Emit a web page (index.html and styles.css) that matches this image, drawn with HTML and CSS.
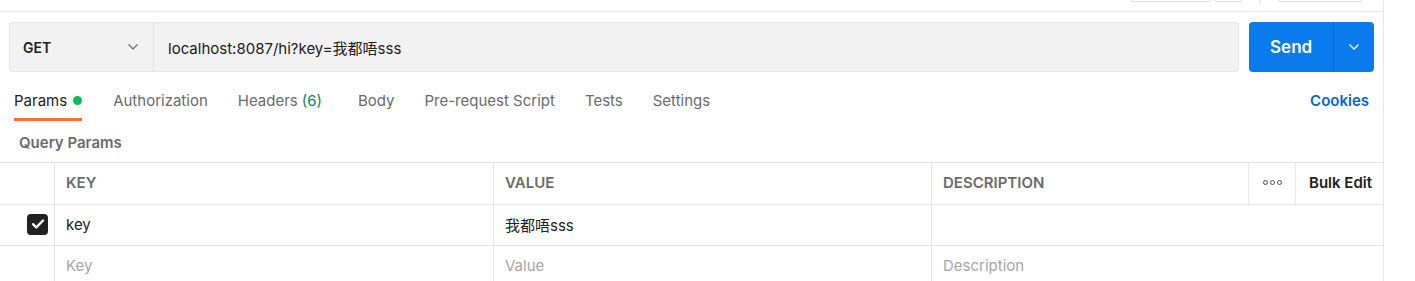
FILE: index.html
```html
<!DOCTYPE html>
<html>
<head>
<meta charset="utf-8">
<link rel="stylesheet" href="styles.css">
</head>
<body>
<div class="page">
  <div class="main">
    <div class="topbar">
      <div class="tb-btn tb-a"></div>
      <div class="tb-btn tb-b"></div>
      <div class="tb-sep"></div>
      <div class="tb-btn tb-c"></div>
    </div>
    <div class="request">
      <div class="urlbar">
        <div class="method">
          <span class="method-name">GET</span>
          <svg class="chev" width="12" height="8" viewBox="0 0 12 8"><path d="M1.5 1.5 L6 6 L10.5 1.5" fill="none" stroke="#6b6b6b" stroke-width="1.2"/></svg>
        </div>
        <div class="url">localhost:8087/hi?key=我都唔sss</div>
      </div>
      <div class="send">
        <span class="send-label">Send</span>
        <span class="send-drop"><svg width="12" height="8" viewBox="0 0 12 8"><path d="M1.5 1.5 L6 6 L10.5 1.5" fill="none" stroke="#fff" stroke-width="1.3"/></svg></span>
      </div>
    </div>
    <div class="tabs">
      <div class="tab active">Params <span class="dot"></span></div>
      <div class="tab">Authorization</div>
      <div class="tab tab-wide">Headers <span class="count">(6)</span></div>
      <div class="tab">Body</div>
      <div class="tab">Pre-request Script</div>
      <div class="tab">Tests</div>
      <div class="tab">Settings</div>
      <div class="spacer"></div>
      <div class="cookies">Cookies</div>
    </div>
    <div class="qp">Query Params</div>
    <div class="table">
      <div class="row head">
        <div class="cell c-check"></div>
        <div class="cell c-key">KEY</div>
        <div class="cell c-val">VALUE</div>
        <div class="cell c-desc">DESCRIPTION</div>
        <div class="cell c-more"><span class="dots"><i></i><i></i><i></i></span></div>
        <div class="cell c-bulk">Bulk Edit</div>
      </div>
      <div class="row">
        <div class="cell c-check"><span class="checkbox"><svg width="14" height="12" viewBox="0 0 14 12"><path d="M2 6.2 L5.3 9.3 L12 2.5" fill="none" stroke="#fff" stroke-width="2.4" stroke-linecap="round" stroke-linejoin="round"/></svg></span></div>
        <div class="cell c-key text">key</div>
        <div class="cell c-val text">我都唔sss</div>
        <div class="cell c-descwide"></div>
      </div>
      <div class="row last">
        <div class="cell c-check"></div>
        <div class="cell c-key ph">Key</div>
        <div class="cell c-val ph">Value</div>
        <div class="cell c-descwide ph">Description</div>
      </div>
    </div>
  </div>
</div>
</body>
</html>
```

FILE: styles.css
```css
* { box-sizing: border-box; }
html, body { margin: 0; padding: 0; background: #fff; }
body {
  font-family: Inter, "Noto Sans", "Noto Sans CJK SC", sans-serif;
  font-size: 15px;
  color: #212121;
  width: 1415px;
  height: 281px;
  overflow: hidden;
}
.page { display: flex; height: 281px; }
.main {
  width: 1384px;
  border-right: 1px solid #e6e6e6;
  height: 281px;
}
.topbar {
  height: 12px;
  border-bottom: 1px solid #e6e6e6;
  display: flex;
  align-items: flex-start;
}
.tb-btn {
  height: 2px;
  border: 1px solid #e0e0e0;
  border-top: none;
  border-radius: 0 0 3px 3px;
}
.tb-a { margin-left: 1131px; width: 80px; }
.tb-b { margin-left: 4px; width: 27px; }
.tb-sep { margin-left: 18px; width: 1px; height: 3px; background: #e0e0e0; }
.tb-c { margin-left: 17px; width: 84px; }

.request {
  display: flex;
  padding: 10px 9px 0 9px;
  height: 60px;
}
.urlbar {
  width: 1231px;
  height: 50px;
  display: flex;
  background: #f2f2f2;
  border: 1px solid #e6e6e6;
  border-radius: 4px;
}
.method {
  width: 144px;
  display: flex;
  align-items: center;
  justify-content: space-between;
  padding: 0 14px 0 13px;
  border-right: 1px solid #e3e3e3;
}
.method-name { font-weight: 600; font-size: 14px; color: #212121; }
.url {
  display: flex;
  align-items: center;
  padding-left: 14px;
  font-size: 15px;
  color: #212121;
}
.send {
  margin-left: 10px;
  width: 125px;
  height: 50px;
  background: #097bed;
  border-radius: 4px;
  display: flex;
  color: #fff;
}
.send-label {
  width: 85px;
  display: flex;
  align-items: center;
  justify-content: center;
  font-weight: 600;
  font-size: 17px;
  border-right: 1px solid #0867c8;
}
.send-drop {
  flex: 1;
  display: flex;
  align-items: center;
  justify-content: center;
}

.tabs {
  display: flex;
  align-items: stretch;
  height: 50px;
  padding: 0 14px;
}
.tab {
  display: flex;
  align-items: center;
  font-size: 15px;
  color: #6b6b6b;
  margin-right: 30px;
  padding-top: 11px;
  border-bottom: 3px solid transparent;
  margin-bottom: 1px;
}
.tab.active {
  color: #212121;
  border-bottom-color: #ff6c37;
  margin-right: 31px;
}
.dot {
  display: inline-block;
  width: 9px;
  height: 9px;
  border-radius: 50%;
  background: #0cbb52;
  margin-left: 6px;
}
.count { color: #0a8a52; margin-left: 4px; }
.tab-wide { margin-right: 36px; }
.spacer { flex: 1; }
.cookies {
  display: flex;
  align-items: center;
  padding-top: 11px;
  padding-bottom: 4px;
  color: #0265d2;
  font-weight: 600;
  font-size: 15px;
}

.qp {
  height: 40px;
  padding: 11px 0 0 19px;
  font-weight: 600;
  color: #6b6b6b;
  font-size: 15px;
}
.table { border-top: 1px solid #e6e6e6; }
.row {
  display: flex;
  height: 41px;
  border-bottom: 1px solid #e6e6e6;
}
.row.head { height: 42px; }
.row.last { border-bottom: none; }
.cell {
  display: flex;
  align-items: center;
  border-right: 1px solid #e6e6e6;
  padding-left: 11px;
  padding-bottom: 2px;
  font-size: 15px;
}
.cell:last-child { border-right: none; }
.head .cell { font-weight: 600; color: #6b6b6b; }
.c-check { width: 55px; justify-content: flex-end; padding-right: 6px; padding-left: 0; }
.c-key { width: 439px; }
.c-val { width: 438px; }
.c-desc { width: 317px; }
.c-descwide { flex: 1; }
.c-more { width: 47px; justify-content: center; padding-left: 0; }
.head .c-bulk { flex: 1; color: #212121; padding-left: 13px; }
.text { color: #212121; }
.ph { color: #a6a6a6; }
.dots { display: flex; gap: 2px; }
.dots i {
  width: 5px; height: 5px;
  border: 1.2px solid #505050;
  border-radius: 50%;
}
.checkbox {
  width: 21px;
  height: 21px;
  background: #212121;
  border-radius: 4px;
  display: flex;
  align-items: center;
  justify-content: center;
}
```
